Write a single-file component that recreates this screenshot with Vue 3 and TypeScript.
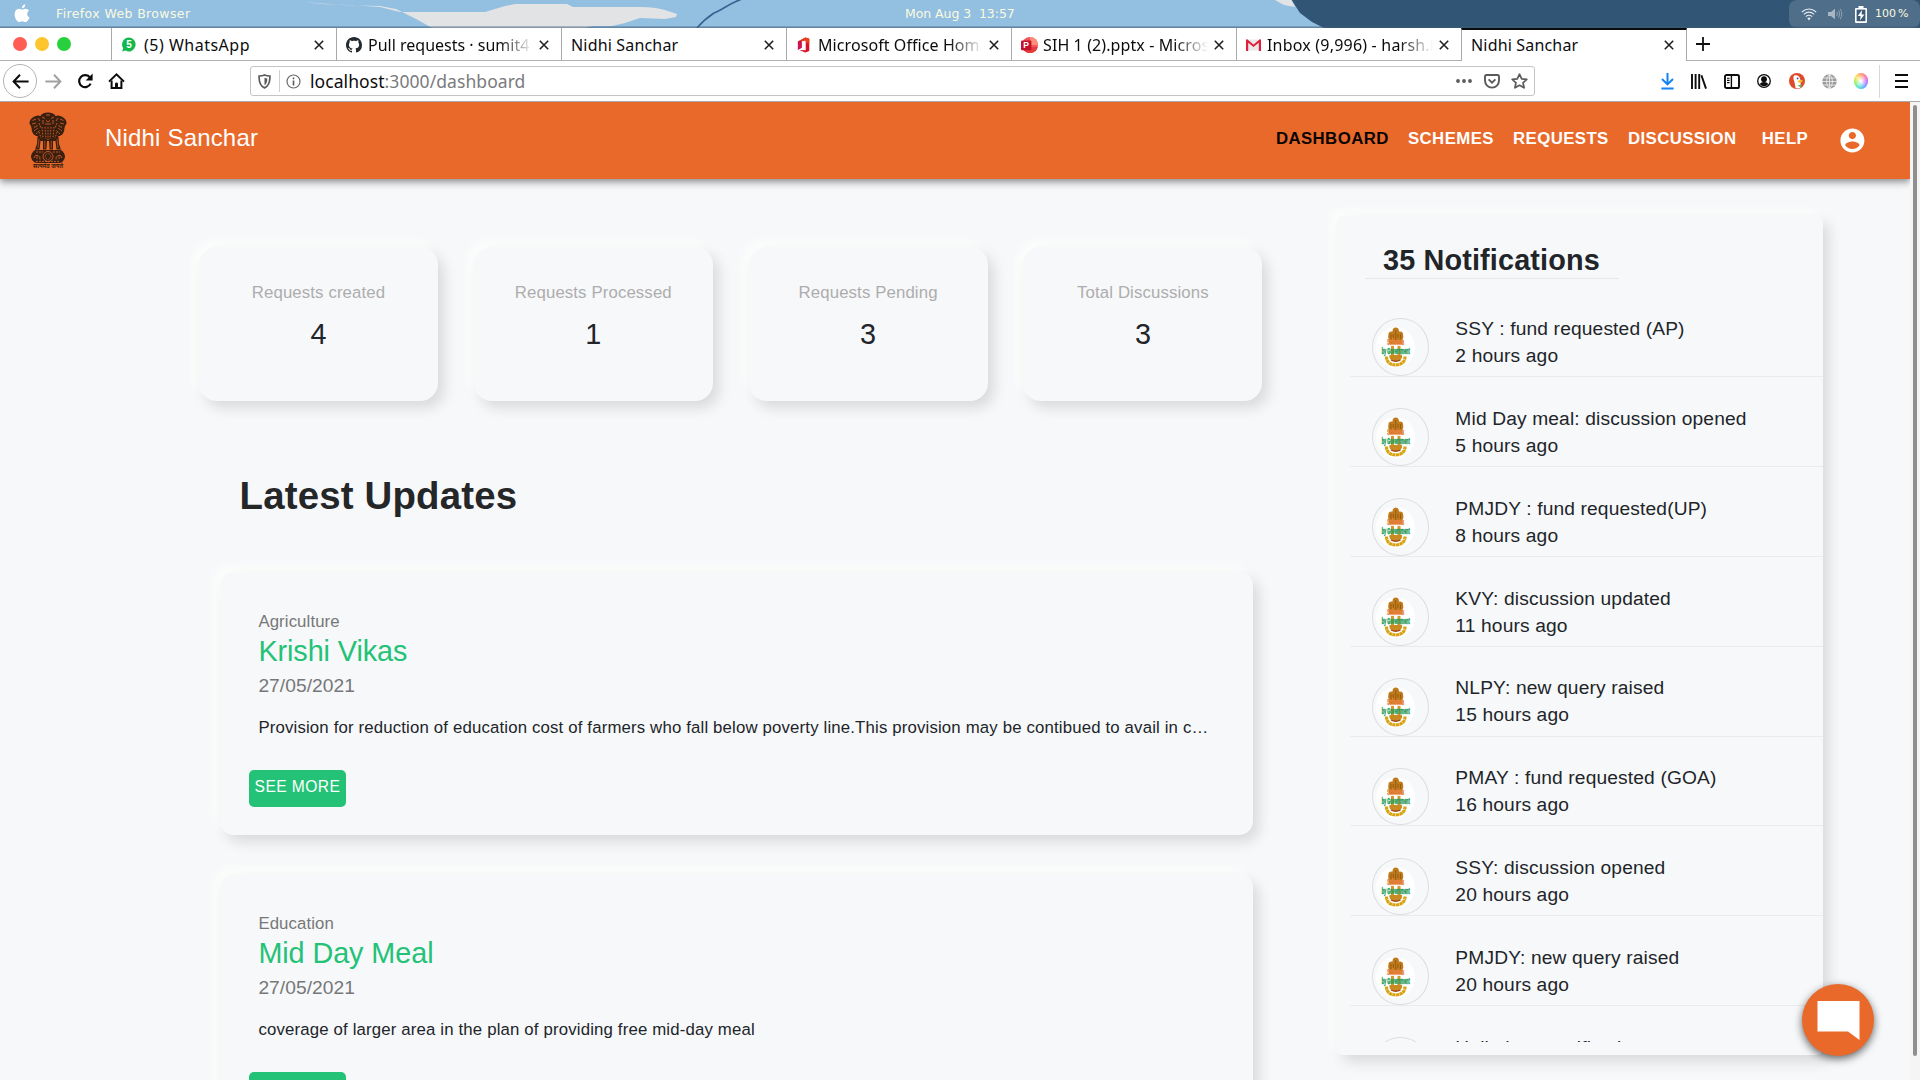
<script setup lang="ts">
interface Tab {
  title: string
  icon?: 'whatsapp' | 'github' | 'office' | 'ppt' | 'gmail'
  active?: boolean
  spacing: number
}

const tabs: Tab[] = [
  { title: '(5) WhatsApp', icon: 'whatsapp', spacing: 0.5 },
  { title: 'Pull requests · sumit4', icon: 'github', spacing: 0 },
  { title: 'Nidhi Sanchar', spacing: 0.17 },
  { title: 'Microsoft Office Hom', icon: 'office', spacing: 0.08 },
  { title: 'SIH 1 (2).pptx - Micros', icon: 'ppt', spacing: 0.1 },
  { title: 'Inbox (9,996) - harsh.k', icon: 'gmail', spacing: 0.2 },
  { title: 'Nidhi Sanchar', active: true, spacing: 0.17 },
]

const links = ['DASHBOARD', 'SCHEMES', 'REQUESTS', 'DISCUSSION', 'HELP']

const stats = [
  { label: 'Requests created', value: 4 },
  { label: 'Requests Processed', value: 1 },
  { label: 'Requests Pending', value: 3 },
  { label: 'Total Discussions', value: 3 },
]

const updates = [
  {
    ministry: 'Agriculture',
    title: 'Krishi Vikas',
    date: '27/05/2021',
    text: 'Provision for reduction of education cost of farmers who fall below poverty line.This provision may be contibued to avail in c…',
  },
  {
    ministry: 'Education',
    title: 'Mid Day Meal',
    date: '27/05/2021',
    text: 'coverage of larger area in the plan of providing free mid-day meal',
  },
]

const notifications = [
  { text: 'SSY : fund requested (AP)', time: '2 hours ago' },
  { text: 'Mid Day meal: discussion opened', time: '5 hours ago' },
  { text: 'PMJDY : fund requested(UP)', time: '8 hours ago' },
  { text: 'KVY: discussion updated', time: '11 hours ago' },
  { text: 'NLPY: new query raised', time: '15 hours ago' },
  { text: 'PMAY : fund requested (GOA)', time: '16 hours ago' },
  { text: 'SSY: discussion opened', time: '20 hours ago' },
  { text: 'PMJDY: new query raised', time: '20 hours ago' },
  { text: 'Hello here notification', time: '' },
]
</script>

<template>
  <div class="screen">
    <!-- desktop panel -->
    <div class="desktop">
      <svg class="wallpaper" width="1920" height="28" viewBox="0 0 1920 28">
        <rect width="1920" height="28" fill="#93bfe1" />
        <path d="M305 2 Q325 5 350 5 L380 7 L392 10 L400 12 H485 L505 6 L515 4 H567 L573 7 H640 Q655 7 665 10 L677 14 L676 17 L665 19 L640 18 L625 23 L612 26 H592 L585 28 H432 L418 20 L406 14 L396 9 L380 6 L340 5 Z" fill="#e2e3e4" />
        <path d="M697 28 C702 22 708 17 714 13 C722 10 730 3 742 -1" fill="none" stroke="#33648f" stroke-width="1.6" />
        <path d="M1291 -1 L1300 13 L1312 22 L1324 28 H1920 V-1 Z" fill="#315575" />
        <path d="M1273 -1 L1284 5 L1295 7 L1291 -1 Z" fill="#e2e3e4" />
      </svg>
      <svg class="apple" width="16" height="19" viewBox="0 0 16 19">
        <path d="M11.2 .3 C9.3 .6 7.7 2.2 7.9 4.4 C9.9 4.4 11.4 2.5 11.2 .3 Z M8.2 5.6 C7.4 5.6 6.3 4.8 5 4.8 C2.6 4.9 .6 6.8 .6 10.3 C.6 13.9 3 18 5 18 C6.1 18 6.7 17.2 8.2 17.2 C9.7 17.2 10.2 18 11.4 18 C13.3 18 14.9 15.2 15.4 13.4 C12.6 12.2 12.5 8 15 6.7 C14.2 5.4 12.7 4.7 11.4 4.8 C10.1 4.8 9.2 5.6 8.2 5.6 Z" fill="#fff" />
      </svg>
      <span class="app-name">Firefox Web Browser</span>
      <span class="clock">Mon Aug 3&nbsp; 13:57</span>
      <div class="tray">
        <svg width="16" height="13" viewBox="0 0 16 13" fill="none" stroke="#e6ebef" stroke-width="1.1">
          <path d="M.8 4 Q8 -2 15.2 4 M2.8 6.3 Q8 2 13.2 6.3 M4.8 8.6 Q8 6 11.2 8.6" />
          <path d="M6.2 10 Q8 8.8 9.8 10 L8 12.4 Z" fill="#e6ebef" stroke="none" />
        </svg>
        <svg class="vol" width="15" height="12" viewBox="0 0 15 12" fill="none" stroke="#8fa3b4" stroke-width="1">
          <path d="M0 4 H3 L7 .8 V11.2 L3 8 H0 Z" fill="#a9b7c4" stroke="none" />
          <path d="M8.8 4 Q10 6 8.8 8 M10.6 2.4 Q12.8 6 10.6 9.6 M12.3 1 Q15.3 6 12.3 11" />
        </svg>
        <svg class="bat" width="12" height="17" viewBox="0 0 12 17">
          <path d="M3.5 0 H8.5 V2 H11 Q12 2 12 3 V16 Q12 17 11 17 H1 Q0 17 0 16 V3 Q0 2 1 2 H3.5 Z" fill="#fff" />
          <rect x="1.6" y="3.6" width="8.8" height="11.6" fill="#3c5a76" />
          <path d="M7 4 L2.8 10 H5.6 L5 14.6 L9.4 8.6 H6.6 Z" fill="#fff" />
        </svg>
        <span>100 %</span>
      </div>
    </div>

    <!-- tab strip -->
    <div class="tabs">
      <div class="lights"><i class="red"></i><i class="amber"></i><i class="green"></i></div>
      <div v-for="(t, i) in tabs" :key="i" class="tab" :class="{ active: t.active }">
        <svg v-if="t.icon === 'whatsapp'" class="fav w14" width="14" height="15" viewBox="0 0 14 15">
          <path d="M7 .5 A6.7 7 0 1 1 3.6 13.6 L.2 14.6 L1.2 11.3 A6.7 7 0 0 1 7 .5 Z" fill="#12b94a" />
          <text x="7" y="11" font-size="10" font-weight="bold" text-anchor="middle" fill="#fff" font-family="Liberation Sans, sans-serif">5</text>
        </svg>
        <svg v-else-if="t.icon === 'github'" class="fav" width="16" height="16" viewBox="0 0 16 16">
          <path fill="#24292e" d="M8 0C3.58 0 0 3.58 0 8c0 3.54 2.29 6.53 5.47 7.59.4.07.55-.17.55-.38 0-.19-.01-.82-.01-1.49-2.01.37-2.53-.49-2.69-.94-.09-.23-.48-.94-.82-1.13-.28-.15-.68-.52-.01-.53.63-.01 1.08.58 1.23.82.72 1.21 1.87.87 2.33.66.07-.52.28-.87.51-1.07-1.78-.2-3.64-.89-3.64-3.95 0-.87.31-1.59.82-2.15-.08-.2-.36-1.02.08-2.12 0 0 .67-.21 2.2.82.64-.18 1.32-.27 2-.27s1.36.09 2 .27c1.53-1.04 2.2-.82 2.2-.82.44 1.1.16 1.92.08 2.12.51.56.82 1.27.82 2.15 0 3.07-1.87 3.75-3.65 3.95.29.25.54.73.54 1.48 0 1.07-.01 1.93-.01 2.2 0 .21.15.46.55.38A8.01 8.01 0 0 0 16 8c0-4.42-3.58-8-8-8z" />
        </svg>
        <svg v-else-if="t.icon === 'office'" class="fav w14" width="13" height="16" viewBox="0 0 14 16">
          <path d="M9 0 L13.2 1.4 V14.4 L9 16 L2.4 13.4 L9.4 13.6 V2.8 L5 4 V11 L1 13 V4.2 Z" fill="#d8102a" />
          <path d="M9 0 L13.2 1.4 V7 L9.4 5 V2.8 L5 4 L1 4.2 Z" fill="#e8401a" />
          <path d="M1 4.2 L5 4 V11 L1 13 Z" fill="#d01050" />
        </svg>
        <svg v-else-if="t.icon === 'ppt'" class="fav w18" width="17" height="16" viewBox="0 0 17 16">
          <circle cx="9" cy="8" r="8" fill="#f0565a" />
          <path d="M9 0 A8 8 0 0 1 17 8 H9 Z" fill="#ff8f7b" />
          <path d="M1.2 10 H16.7 A8 8 0 0 1 1.2 10 Z" fill="#e83a3a" />
          <rect x="0" y="3.4" width="10.4" height="9.8" rx="1" fill="#c3112c" />
          <text x="5.2" y="11.2" font-size="8.5" font-weight="bold" text-anchor="middle" fill="#fff" font-family="Liberation Sans, sans-serif">P</text>
        </svg>
        <svg v-else-if="t.icon === 'gmail'" class="fav" width="15" height="12" viewBox="0 0 15 12">
          <rect x="1" y="0.5" width="13" height="11" fill="#e9e9e9" />
          <path d="M0 1 Q0 0 1.2 .2 L7.5 5.6 L13.8 .2 Q15 0 15 1 V12 H12.8 V3.8 L7.5 8 L2.2 3.8 V12 H0 Z" fill="#e01f3a" />
        </svg>
        <span class="tab-title" :class="{ fade: t.icon && i > 0 }" :style="{ letterSpacing: t.spacing + 'px' }">{{ t.title }}</span>
        <svg class="close" width="10" height="10" viewBox="0 0 10 10" stroke="#222" stroke-width="1.6"><path d="M.8 .8 L9.2 9.2 M9.2 .8 L.8 9.2" /></svg>
      </div>
      <svg class="plus" width="14" height="14" viewBox="0 0 14 14" stroke="#111" stroke-width="1.8"><path d="M7 0 V14 M0 7 H14" /></svg>
    </div>

    <!-- navigation toolbar -->
    <div class="toolbar">
      <div class="back">
        <svg width="17" height="15" viewBox="0 0 17 15" fill="none" stroke="#0c0c0d" stroke-width="2"><path d="M8 .8 L1.6 7.5 L8 14.2 M1.8 7.5 H16.6" /></svg>
      </div>
      <svg class="fwd" width="17" height="15" viewBox="0 0 17 15" fill="none" stroke="#a2a2a3" stroke-width="2"><path d="M9 .8 L15.4 7.5 L9 14.2 M15.2 7.5 H.4" /></svg>
      <svg class="reload" width="16" height="16" viewBox="0 0 16 16"><path d="M13 4.6 A6 6 0 1 0 13.6 10.6" fill="none" stroke="#0c0c0d" stroke-width="2.2" /><path d="M15.6 .6 V7.6 H8.6 Z" fill="#0c0c0d" /></svg>
      <svg class="home" width="17" height="16" viewBox="0 0 17 16"><path d="M1 8.6 L8.5 1.4 L16 8.6" fill="none" stroke="#0c0c0d" stroke-width="2" /><path d="M3.6 7.6 V14.9 H13.4 V7.6" fill="none" stroke="#0c0c0d" stroke-width="2" /><path d="M7 15 V11 Q7 9.6 8.5 9.6 Q10 9.6 10 11 V15 Z" fill="#0c0c0d" /></svg>
      <div class="urlbar">
        <svg class="shield" width="13" height="15" viewBox="0 0 13 15"><path d="M6.5 1 C8.4 1.9 10.2 2 11.9 2 C12.1 8 10.8 12 6.5 13.9 C2.2 12 .9 8 1.1 2 C2.8 2 4.6 1.9 6.5 1 Z" fill="none" stroke="#5a5a5c" stroke-width="1.7" /><path d="M6.5 3.8 C7.5 4.3 8.4 4.4 9.3 4.4 C9.3 8 8.6 10 6.5 11.3 Z" fill="#5a5a5c" /></svg>
        <i class="vline"></i>
        <svg class="info" width="15" height="15" viewBox="0 0 15 15"><circle cx="7.5" cy="7.5" r="6.5" fill="none" stroke="#6a6a6c" stroke-width="1.2" /><path d="M6.7 6.4 H8.3 V11.4 H6.7 Z M6.7 3.6 H8.3 V5.2 H6.7 Z" fill="#5a5a5c" /></svg>
        <span class="url">localhost<em>:3000/dashboard</em></span>
        <svg class="dots" width="16" height="4" viewBox="0 0 16 4" fill="#5a5a5c"><circle cx="2" cy="2" r="1.9" /><circle cx="8" cy="2" r="1.9" /><circle cx="14" cy="2" r="1.9" /></svg>
        <svg class="pocket" width="16" height="15" viewBox="0 0 16 15" fill="none" stroke="#5a5a5c" stroke-width="1.9"><path d="M1 2.4 Q1 1 2.4 1 H13.6 Q15 1 15 2.4 V6.6 A7 7 0 0 1 1 6.6 Z" /><path d="M4.6 5.4 L8 8.7 L11.4 5.4" /></svg>
        <svg class="star" width="17" height="16" viewBox="0 0 17 16" fill="none" stroke="#5a5a5c" stroke-width="1.7" stroke-linejoin="round"><path d="M8.5 1.2 L10.7 5.8 L15.8 6.4 L12 9.8 L13.1 14.8 L8.5 12.3 L3.9 14.8 L5 9.8 L1.2 6.4 L6.3 5.8 Z" /></svg>
      </div>
      <div class="exts">
        <svg width="13" height="17" viewBox="0 0 13 17" fill="none" stroke="#1283f5" stroke-width="2"><path d="M6.5 0 V11 M1 6 L6.5 11.4 L12 6 M.4 15.6 H12.6" /></svg>
        <svg width="16" height="15" viewBox="0 0 16 15" fill="none" stroke="#0c0c0d" stroke-width="1.9"><path d="M1 0 V15 M4.6 0 V15 M8.2 0 V15 M10.4 1.2 L15 14.6" /></svg>
        <svg width="16" height="15" viewBox="0 0 16 15" fill="none" stroke="#0c0c0d" stroke-width="1.9"><rect x="1" y="1" width="14" height="13" rx="1.6" /><path d="M7.4 1 V14" stroke-width="1.4" /><path d="M3 4.2 H5.6 M3 6.4 H5.6 M3 8.6 H5.6" stroke-width="1.1" /></svg>
        <svg width="14" height="14" viewBox="0 0 14 14"><circle cx="7" cy="7" r="6.3" fill="none" stroke="#0c0c0d" stroke-width="1.3" /><circle cx="7" cy="5.2" r="2.9" fill="#0c0c0d" /><path d="M2.6 10 Q4 8 7 8 Q10 8 11.4 10 Q9.6 12.3 7 12.3 Q4.4 12.3 2.6 10 Z" fill="#0c0c0d" /></svg>
        <svg width="16" height="16" viewBox="0 0 16 16"><circle cx="8" cy="8" r="8" fill="#de4b2c" /><path d="M5 2.6 Q9 1.6 10.8 4.8 Q12 8 11.4 14.4 Q9 16 6.6 15 Q6 10 4.6 6.6 Q4 4 5 2.6 Z" fill="#fff" /><path d="M8.6 8 Q11 6.6 14 7.4 Q13.6 9.2 9.6 9.6 Z" fill="#fcc21b" /><path d="M8.4 12.6 L12.6 11.4 L12.4 14.4 Z" fill="#5cb85c" /><circle cx="8.6" cy="5.4" r=".9" fill="#2d4f8e" /></svg>
        <svg width="15" height="15" viewBox="0 0 15 15"><circle cx="7.5" cy="7.5" r="7.2" fill="#9b9b9b" /><path d="M0 7.5 H15 M7.5 0 V15 M1.4 4 H13.6 M1.4 11 H13.6 M7.5 0 Q1.4 7.5 7.5 15 Q13.6 7.5 7.5 0" fill="none" stroke="#f2f2f2" stroke-width=".8" /></svg>
        <i class="wheel"></i>
      </div>
      <i class="tsep"></i>
      <svg class="burger" width="13" height="14" viewBox="0 0 13 14" stroke="#0c0c0d" stroke-width="2"><path d="M0 1 H13 M0 7 H13 M0 13 H13" /></svg>
    </div>

    <!-- page -->
    <div class="viewport">
      <div class="page">
        <header class="appbar">
          <svg class="emblem" width="40" height="58" viewBox="0 0 40 58">
            <g fill="#3a1f10">
              <path d="M12.5 5 Q14 1.5 20 1.5 Q26 1.5 27.5 5 Q31 3.5 34.5 6 Q38.5 8 38.6 12.5 Q37 14 36.5 17 Q36.5 24 30 25.5 L28 28 H12 L10 25.5 Q3.5 24 3.5 17 Q3 14 1.4 12.5 Q1.5 8 5.5 6 Q9 3.5 12.5 5 Z" />
              <path d="M9.5 26 H30.5 L31 33 L33 38.5 H28.5 L27.5 30 H25 L25 38.5 H21.6 L21 30 H19 L18.4 38.5 H15 L15 30 H12.5 L11.5 38.5 H7 L9 33 Z" />
              <path d="M7 39 H33 Q37 42 37 46 Q36 51.5 31 52 H9 Q4 51.5 3 46 Q3 42 7 39 Z" />
            </g>
            <g fill="none" stroke="#e8692a" stroke-width=".75">
              <path d="M14 6 L17 7.5 M26 6 L23 7.5 M18 9.5 L20 11 L22 9.5 M17 13 H23 M15 9 V13 M25 9 V13 M18 4 H22" />
              <path d="M4.5 9.5 L8 8 M4 13 L8 12 M6 16.5 L9.5 14.5 M35.5 9.5 L32 8 M36 13 L32 12 M34 16.5 L30.5 14.5 M10 7 L12 10 M30 7 L28 10" />
              <path d="M6 20 L10 17 M8 23 L12 19 M34 20 L30 17 M32 23 L28 19 M11 12 L13 17 M29 12 L27 17" stroke-dasharray="2 .8" />
              <path d="M14 16 L15 27 M26 16 L25 27 M17 16 L18 28 M23 16 L22 28 M20 16 V29 M11 21 L13 27 M29 21 L27 27" stroke-dasharray="1.6 1.3" />
              <path d="M11 28 L10 37 M29 28 L30 37 M16.8 30 V37.5 M23.2 30 V37.5" stroke-width=".6" />
              <circle cx="20" cy="45.5" r="5" /><circle cx="20" cy="45.5" r="2.8" stroke-dasharray="1 .8" />
              <path d="M8 41 H15 M25 41 H32 M8 50.4 H32" stroke-dasharray="2 1" />
              <path d="M6 47 Q7 43 10 44.5 Q12.5 46 12 48.5 M34 47 Q33 43 30 44.5 Q27.5 46 28 48.5 M9 48 V45.5 M31 48 V45.5" />
            </g>
            <text x="20" y="57.3" font-size="5.6" font-weight="bold" text-anchor="middle" fill="#3a1f10" font-family="Noto Sans, sans-serif" textLength="30" lengthAdjust="spacingAndGlyphs">सत्यमेव जयते</text>
          </svg>
          <span class="brand">Nidhi Sanchar</span>
          <nav class="nav">
            <a v-for="(l, i) in links" :key="l" :class="{ current: i === 0, last: i === 4 }">{{ l }}</a>
          </nav>
          <svg class="account" width="28.8" height="28.8" viewBox="0 0 24 24" fill="#fff"><path d="M12 2C6.48 2 2 6.48 2 12s4.48 10 10 10 10-4.48 10-10S17.52 2 12 2zm0 3c1.66 0 3 1.34 3 3s-1.34 3-3 3-3-1.34-3-3 1.34-3 3-3zm0 14.2c-2.5 0-4.71-1.28-6-3.22.03-1.99 4-3.08 6-3.08 1.99 0 5.97 1.09 6 3.08-1.29 1.94-3.5 3.22-6 3.22z" /></svg>
        </header>

        <div class="columns">
          <main class="main">
            <section class="stats">
              <div v-for="s in stats" :key="s.label" class="stat neu">
                <div class="stat-label">{{ s.label }}</div>
                <div class="stat-value">{{ s.value }}</div>
              </div>
            </section>
            <h1 class="heading">Latest Updates</h1>
            <article v-for="u in updates" :key="u.title" class="update neu">
              <div class="ministry">{{ u.ministry }}</div>
              <div class="scheme">{{ u.title }}</div>
              <div class="date">{{ u.date }}</div>
              <p class="desc">{{ u.text }}</p>
              <button class="more">SEE MORE</button>
            </article>
          </main>

          <aside class="panel neu">
            <h2 class="panel-title">35 Notifications</h2>
            <div class="list">
              <div v-for="(n, i) in notifications" :key="i" class="item">
                <div class="avatar">
                  <svg width="40" height="46" viewBox="0 0 40 46">
                    <ellipse cx="19.5" cy="21.5" rx="19.5" ry="20.5" fill="#fff" />
                    <path d="M12.5 8 Q12.5 5 16.5 5.5 Q16.5 1.5 19.7 1.5 Q23 1.5 23 5.5 Q27 5 27 8 Q28 11.5 26.5 14 V18 H13 V14 Q11.5 11.5 12.5 8 Z" fill="#c07a1e" />
                    <path d="M15 8 V13 M24.5 8 V13 M19.7 4 V14 M17.3 8 V12 M22 8 V12" stroke="#94590f" stroke-width=".9" />
                    <rect x="15" y="20" width="3" height="12" fill="#d39a2a" />
                    <rect x="21.5" y="20" width="3" height="12" fill="#d39a2a" />
                    <path d="M13.5 29 H26 Q27.5 34 19.7 35.5 Q12 34 13.5 29 Z" fill="#c98a22" />
                    <path d="M15 34 Q19.7 36.5 24.5 34" fill="none" stroke="#a5471c" stroke-width="1.4" />
                    <path d="M10.5 30.5 Q10.5 38.5 19.7 39 Q29 38.5 29 30.5" fill="none" stroke="#d9a30f" stroke-width="3.2" stroke-dasharray="3.2 .4" />
                    <text x="19.7" y="19" class="av a1" textLength="17" lengthAdjust="spacingAndGlyphs">Schemes</text>
                    <text x="19.7" y="28" class="av a2" textLength="28" lengthAdjust="spacingAndGlyphs">by Government</text>
                  </svg>
                </div>
                <div class="item-text">
                  <div>{{ n.text }}</div>
                  <div class="time">{{ n.time }}</div>
                </div>
              </div>
            </div>
            <button class="fab">
              <svg width="43" height="39" viewBox="0 0 43 39"><path d="M.5 0 H42.5 V39 L31 30.5 H.5 Z" fill="#fff" /></svg>
            </button>
          </aside>
        </div>
      </div>
      <div class="scroll"><i></i></div>
    </div>
  </div>
</template>

<style>
html,
body {
  margin: 0;
  overflow: hidden;
}
</style>

<style scoped>
.screen {
  width: 1920px;
  height: 1080px;
  overflow: hidden;
  display: flex;
  flex-direction: column;
  background: #f7f8fa;
  font-family: 'Liberation Sans', Arial, sans-serif;
  color: #212529;
}
.screen * {
  box-sizing: border-box;
}
svg {
  flex: none;
  display: block;
}

/* desktop panel */
.desktop {
  position: relative;
  flex: none;
  height: 28px;
  display: flex;
  align-items: center;
  font: 12.5px/28px 'DejaVu Sans', sans-serif;
  color: #fbfae0;
}
.wallpaper {
  position: absolute;
  inset: 0;
}
.desktop > :not(.wallpaper) {
  position: relative;
}
.desktop::after {
  content: '';
  position: absolute;
  left: 0;
  right: 0;
  bottom: 0;
  height: 2px;
  background: linear-gradient(rgba(60, 90, 120, 0.25), rgba(60, 90, 120, 0.65));
}
.apple {
  margin: 0 0 1px 14px;
}
.app-name {
  margin-left: 26px;
  width: 849px;
  letter-spacing: 0.38px;
}
.clock {
  white-space: pre;
  letter-spacing: -0.06px;
}
.tray {
  margin-left: auto;
  width: 131px;
  height: 28px;
  padding-left: 12px;
  display: flex;
  align-items: center;
  background: rgba(255, 255, 255, 0.15);
  border-radius: 8px;
}
.tray .vol {
  margin-left: 11px;
}
.tray .bat {
  margin-left: 12px;
}
.tray span {
  margin-left: 8px;
  white-space: nowrap;
  font-size: 11px;
  word-spacing: -1.5px;
}

/* tabs */
.tabs {
  flex: none;
  height: 33px;
  display: flex;
  background: #fff;
  border-bottom: 1px solid #b0b0b2;
  font: 16px/34px 'Noto Sans', sans-serif;
  color: #0c0c0d;
}
.lights {
  width: 111px;
  display: flex;
  align-items: center;
  gap: 8px;
  padding-left: 13px;
}
.lights i {
  width: 14px;
  height: 14px;
  border-radius: 50%;
}
.red {
  background: #ff5c54;
}
.amber {
  background: #fdc62e;
}
.green {
  background: #28d03e;
}
.tab {
  width: 225px;
  height: 33px;
  border-left: 1px solid #a9a9ab;
  display: flex;
  align-items: center;
  padding: 0 12px 0 9px;
}
.tab.active {
  background: #fff;
  border-top: 2px solid #0c0c0d;
  border-right: 1px solid #a9a9ab;
  line-height: 32px;
  width: 226px;
}
.tab.active .close {
  margin-bottom: 2px;
}
.fav {
  margin-right: 6px;
}
.fav.w14 {
  margin-left: 1px;
  margin-right: 8px;
}
.fav.w18 {
  margin-right: 5px;
}
.tab-title {
  flex: 1;
  overflow: hidden;
  white-space: nowrap;
  height: 33px;
}
.tab-title.fade {
  -webkit-mask-image: linear-gradient(to left, transparent 2px, #000 36px);
  mask-image: linear-gradient(to left, transparent 2px, #000 36px);
}
.close {
  margin-left: 4px;
}
.plus {
  margin: 9px 0 0 9px;
}

/* toolbar */
.toolbar {
  flex: none;
  height: 41px;
  display: flex;
  align-items: center;
  background: #fff;
  border-bottom: 1px solid #a9a9ab;
}
.back {
  width: 34px;
  height: 34px;
  margin-left: 3px;
  border: 1px solid #b5b5b6;
  border-radius: 50%;
  display: flex;
  align-items: center;
  justify-content: center;
}
.fwd {
  margin-left: 8px;
}
.reload {
  margin-left: 15px;
}
.home {
  margin-left: 15px;
}
.urlbar {
  width: 1285px;
  height: 30px;
  margin-left: 125px;
  border: 1px solid #c4c4c6;
  border-radius: 3px;
  display: flex;
  align-items: center;
}
.shield {
  margin-left: 7px;
}
.vline {
  width: 1px;
  height: 22px;
  background: #cfcfd1;
  margin: 0 6px 0 8px;
}
.url {
  margin-left: 9px;
  font: 17.5px/28px 'Noto Sans', sans-serif;
  letter-spacing: 0.07px;
  color: #0c0c0d;
}
.url em {
  font-style: normal;
  color: #7a7a7c;
}
.dots {
  margin-left: auto;
}
.pocket {
  margin-left: 12px;
}
.star {
  margin: 0 6px 0 11px;
}
.exts {
  width: 207px;
  margin-left: 126px;
  display: flex;
  align-items: center;
  justify-content: space-between;
}
.wheel {
  width: 14px;
  height: 16px;
  border-radius: 50%;
  background: radial-gradient(#fff 5%, rgba(255, 255, 255, 0) 70%), conic-gradient(#ff9a5c, #f75cb0, #b45cff, #4aa8ff, #4ae8c8, #8cf04a, #ffe34a, #ff9a5c);
}
.tsep {
  width: 1px;
  height: 33px;
  background: #d8d8da;
  margin: 0 15px 0 11px;
}

/* page */
.viewport {
  flex: 1;
  min-height: 0;
  display: flex;
}
.page {
  width: 1910px;
  height: 978px;
  overflow: hidden;
}
.scroll {
  width: 10px;
  background: #f5f5f6;
}
.scroll i {
  display: block;
  width: 4px;
  height: 951px;
  margin: 3px 0 0 3px;
  border-radius: 2px;
  background: #8f8f90;
}
.appbar {
  position: relative;
  height: 77px;
  display: flex;
  background: #e8692a;
  color: #fff;
  box-shadow: 0 2px 5px -1px rgba(0, 0, 0, 0.24), 0 5px 6px rgba(0, 0, 0, 0.17), 0 1px 12px rgba(0, 0, 0, 0.14);
}
.emblem {
  margin: 9px 0 0 28px;
}
.brand {
  margin: 20px 0 0 37px;
  font-size: 24px;
  line-height: 32px;
  letter-spacing: 0.18px;
}
.nav {
  margin-left: auto;
  display: flex;
  gap: 19.2px;
  font-size: 16.8px;
  font-weight: bold;
  line-height: 24px;
  letter-spacing: 0.42px;
  padding-top: 25px;
}
.nav .current {
  color: #0a0504;
}
.nav .last {
  margin-left: 6px;
}
.account {
  margin: 24px 43px 0 30px;
}
.columns {
  display: flex;
  align-items: flex-start;
}
.neu {
  background: #f7f8fa;
  box-shadow: 6px 7px 14px rgba(0, 0, 0, 0.12), -5px -5px 10px #fdfefc;
}
.main {
  width: 1063.4px;
  margin: 68px 0 0 199px;
}
.stats {
  display: flex;
  justify-content: space-between;
}
.stat {
  width: 239px;
  height: 154px;
  padding-top: 34px;
  border-radius: 18px;
  text-align: center;
}
.stat-label {
  font-size: 16.8px;
  line-height: 24px;
  letter-spacing: 0.12px;
  color: #adadad;
}
.stat-value {
  margin-top: 12px;
  font-size: 28.8px;
  line-height: 34px;
}
.heading {
  margin: 72px 0 52.5px 40.5px;
  font-size: 38.4px;
  line-height: 46px;
  letter-spacing: 0.19px;
  font-weight: bold;
  color: #242628;
}
.update {
  width: 1033px;
  height: 263.5px;
  margin: 0 0 39px 21px;
  padding: 38px 38.4px 0;
  border-radius: 14px;
}
.ministry {
  font-size: 16.8px;
  line-height: 24px;
  letter-spacing: 0.1px;
  color: #767778;
}
.scheme {
  font-size: 28.8px;
  line-height: 34px;
  letter-spacing: -0.08px;
  color: #23c277;
}
.date {
  margin-top: 3px;
  font-size: 19.2px;
  line-height: 29px;
  letter-spacing: 0.06px;
  color: #767778;
}
.desc {
  margin: 16px 0 0;
  font-size: 16.8px;
  line-height: 24px;
  letter-spacing: 0.158px;
  white-space: nowrap;
}
.more {
  display: block;
  width: 97px;
  height: 37px;
  margin: 30px 0 0 -9.4px;
  padding: 0 0 4px;
  border: 0;
  border-radius: 5px;
  background: #23c277;
  color: #fff;
  font: 15.6px/27px 'Liberation Sans', Arial, sans-serif;
  letter-spacing: 0.43px;
  white-space: nowrap;
}
.panel {
  position: relative;
  width: 486px;
  height: 839px;
  margin: 37px 0 0 74.6px;
  padding-top: 27px;
  border-radius: 6px;
}
.panel-title {
  width: 254.5px;
  height: 36px;
  margin: 0 0 0 27.6px;
  padding-left: 18.4px;
  border-bottom: 1px solid #e6e8ea;
  font-size: 28.8px;
  line-height: 34px;
  letter-spacing: 0.16px;
  font-weight: bold;
  white-space: nowrap;
}
.list {
  height: 755px;
  margin: 8.3px 0 0 13.4px;
  overflow: hidden;
}
.item {
  height: 89.86px;
  display: flex;
  border-bottom: 1px solid #e9ebed;
}
.avatar {
  width: 56.8px;
  height: 57.6px;
  margin: 31.2px 0 0 21.6px;
  padding: 7px 0 0 3px;
  border: 1px solid #dcdee0;
  border-radius: 50%;
}
.av {
  font-family: 'Liberation Sans', Arial, sans-serif;
  font-size: 8.5px;
  font-weight: bold;
  text-anchor: middle;
  stroke-width: 0.5px;
}
.a1 {
  fill: #e8823f;
  stroke: #e8823f;
}
.a2 {
  fill: #1d9a55;
  stroke: #1d9a55;
}
.item-text {
  padding: 26.7px 0 0 26.6px;
  font-size: 19.2px;
  line-height: 29px;
  letter-spacing: 0.14px;
  white-space: nowrap;
}
.item-text .time {
  line-height: 26.4px;
}
.fab {
  position: absolute;
  left: 465px;
  top: 768px;
  width: 72px;
  height: 72px;
  padding: 1px 0 0 15px;
  border: 0;
  border-radius: 50%;
  background: #e8692a;
  box-shadow: 0 3px 8px rgba(0, 0, 0, 0.6);
}
</style>
